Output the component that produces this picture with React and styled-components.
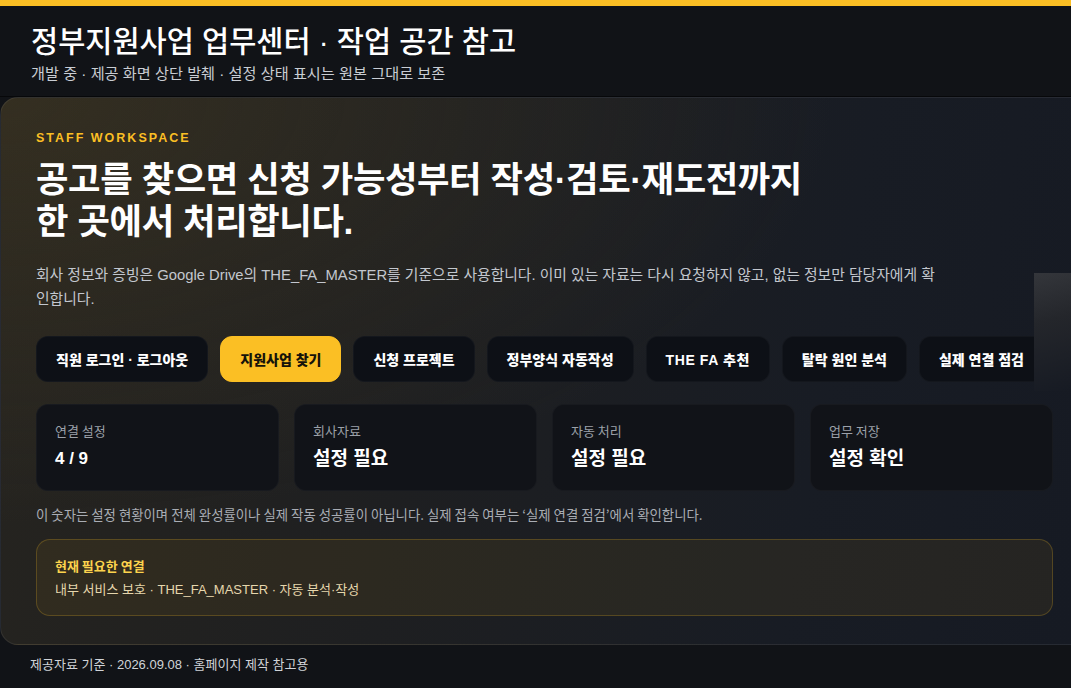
import styled, { createGlobalStyle } from "styled-components";

const GlobalStyle = createGlobalStyle`
  html, body {
    margin: 0;
    padding: 0;
    background: #111317;
    overflow: hidden;
  }
  body {
    font-family: "Liberation Sans", "Noto Sans CJK KR", sans-serif;
    color: #f3f4f6;
  }
  * {
    box-sizing: border-box;
  }
`;

const Page = styled.div`
  display: flex;
  flex-direction: column;
  min-height: 688px;
  width: 1071px;
  background: #111317;
  border-top: 6px solid #fbbf24;
`;

const Header = styled.header`
  display: flex;
  flex-direction: column;
  gap: 4px;
  padding: 19px 31px 12px;
  border-bottom: 1px solid #07080a;
`;

const Title = styled.h1`
  margin: 0;
  font-family: "Liberation Sans", "Noto Sans CJK KR", sans-serif;
  font-size: 29.5px;
  line-height: 34px;
  font-weight: 500;
  color: #ffffff;
`;

const Subtitle = styled.p`
  margin: 0;
  font-family: "Liberation Sans", "Noto Sans CJK KR", sans-serif;
  font-size: 15.2px;
  line-height: 21px;
  color: #c9cdd3;
`;

const Panel = styled.section`
  position: relative;
  overflow: hidden;
  display: flex;
  flex-direction: column;
  padding: 32px 18px 28px 35px;
  border: 1px solid rgba(255, 255, 255, 0.07);
  border-right: none;
  border-radius: 18px 0 0 18px;
  background:
    radial-gradient(ellipse at 0% 0%, rgba(70, 60, 35, 0.45), transparent 55%),
    linear-gradient(100deg, #26241f 0%, #1e1f21 40%, #181c24 75%, #161a23 100%);
`;

const Glare = styled.div`
  position: absolute;
  right: 0;
  top: 175px;
  width: 37px;
  height: 118px;
  background: linear-gradient(165deg, #34363b 0%, #24262b 40%, rgba(22, 26, 35, 0) 100%);
`;

const Eyebrow = styled.div`
  font-family: "Liberation Sans", sans-serif;
  font-size: 12.5px;
  line-height: 16px;
  font-weight: 700;
  letter-spacing: 2px;
  color: #fbbf24;
`;

const Headline = styled.h2`
  margin: 13px 0 0;
  font-family: "Liberation Sans", "Noto Sans CJK KR", sans-serif;
  font-size: 35.3px;
  line-height: 42px;
  font-weight: 700;
  letter-spacing: -0.4px;
  color: #ffffff;
`;

const Lead = styled.p`
  margin: 20px 0 0;
  max-width: 902px;
  font-size: 14.8px;
  line-height: 24px;
  color: #c3c7ce;
`;

const TabRow = styled.nav`
  display: flex;
  gap: 12px;
  margin: 25px 19px 0 0;
  overflow: hidden;
`;

const Tab = styled.button`
  flex-shrink: 0;
  height: 46px;
  padding: 0 19px;
  border: 1px solid ${(p) => (p.active ? "#fbbf24" : "rgba(255, 255, 255, 0.03)")};
  border-radius: 12px;
  background: ${(p) => (p.active ? "#fbbf24" : "#0d1016")};
  color: ${(p) => (p.active ? "#16130a" : "#ffffff")};
  font-family: "Liberation Sans", "Noto Sans CJK KR", sans-serif;
  font-size: 14px;
  font-weight: 800;
  letter-spacing: ${(p) => (p.wide ? "0.6px" : "0")};
  white-space: nowrap;
`;

const Stats = styled.div`
  display: grid;
  grid-template-columns: repeat(4, 1fr);
  gap: 15px;
  margin-top: 22px;
`;

const StatCard = styled.div`
  display: flex;
  flex-direction: column;
  gap: 6px;
  height: 87px;
  padding: 17px 18px;
  border-radius: 12px;
  border: 1px solid rgba(255, 255, 255, 0.03);
  background: #111318;
`;

const StatLabel = styled.span`
  font-family: "Noto Sans CJK KR", sans-serif;
  font-size: 13px;
  line-height: 18px;
  color: #9ca1a9;
`;

const StatValue = styled.span`
  font-family: "Liberation Sans", "Noto Sans CJK KR", sans-serif;
  font-size: ${(p) => (p.small ? "17px" : "19px")};
  line-height: 26px;
  font-weight: 700;
  color: #ffffff;
`;

const Note = styled.p`
  margin: 14px 0 0;
  font-family: "Noto Sans CJK KR", sans-serif;
  font-size: 13.4px;
  line-height: 18px;
  color: #a9adb4;
`;

const Alert = styled.div`
  display: flex;
  flex-direction: column;
  gap: 5px;
  margin-top: 16px;
  padding: 16px 18px;
  border: 1px solid rgba(251, 191, 36, 0.22);
  border-radius: 14px;
  background: rgba(120, 95, 30, 0.16);
`;

const AlertTitle = styled.strong`
  font-family: "Noto Sans CJK KR", sans-serif;
  font-size: 13px;
  line-height: 19px;
  font-weight: 700;
  color: #fcd34d;
`;

const AlertText = styled.span`
  font-family: "Liberation Sans", "Noto Sans CJK KR", sans-serif;
  font-size: 13px;
  line-height: 19px;
  color: #e6d7ad;
`;

const Footer = styled.footer`
  padding: 11px 30px;
  font-family: "Liberation Sans", "Noto Sans CJK KR", sans-serif;
  font-size: 13px;
  line-height: 18px;
  color: #d0d3d8;
`;

const tabs = [
  "직원 로그인 · 로그아웃",
  "지원사업 찾기",
  "신청 프로젝트",
  "정부양식 자동작성",
  "THE FA 추천",
  "탈락 원인 분석",
  "실제 연결 점검",
];

const stats = [
  { label: "연결 설정", value: "4 / 9", small: true },
  { label: "회사자료", value: "설정 필요" },
  { label: "자동 처리", value: "설정 필요" },
  { label: "업무 저장", value: "설정 확인" },
];

export default function App() {
  return (
    <>
      <GlobalStyle />
      <Page>
        <Header>
          <Title>정부지원사업 업무센터 · 작업 공간 참고</Title>
          <Subtitle>
            개발 중 · 제공 화면 상단 발췌 · 설정 상태 표시는 원본 그대로 보존
          </Subtitle>
        </Header>

        <Panel>
          <Glare />
          <Eyebrow>STAFF WORKSPACE</Eyebrow>
          <Headline>
            공고를 찾으면 신청 가능성부터 작성·검토·재도전까지
            <br />한 곳에서 처리합니다.
          </Headline>
          <Lead>
            회사 정보와 증빙은 Google Drive의 THE_FA_MASTER를 기준으로
            사용합니다. 이미 있는 자료는 다시 요청하지 않고, 없는 정보만
            담당자에게 확인합니다.
          </Lead>

          <TabRow>
            {tabs.map((t, i) => (
              <Tab key={t} active={i === 1} wide={t.startsWith("THE")}>
                {t}
              </Tab>
            ))}
          </TabRow>

          <Stats>
            {stats.map((s) => (
              <StatCard key={s.label}>
                <StatLabel>{s.label}</StatLabel>
                <StatValue small={s.small}>{s.value}</StatValue>
              </StatCard>
            ))}
          </Stats>

          <Note>
            이 숫자는 설정 현황이며 전체 완성률이나 실제 작동 성공률이
            아닙니다. 실제 접속 여부는 ‘실제 연결 점검’에서 확인합니다.
          </Note>

          <Alert>
            <AlertTitle>현재 필요한 연결</AlertTitle>
            <AlertText>내부 서비스 보호 · THE_FA_MASTER · 자동 분석·작성</AlertText>
          </Alert>
        </Panel>

        <Footer>제공자료 기준 · 2026.09.08 · 홈페이지 제작 참고용</Footer>
      </Page>
    </>
  );
}
